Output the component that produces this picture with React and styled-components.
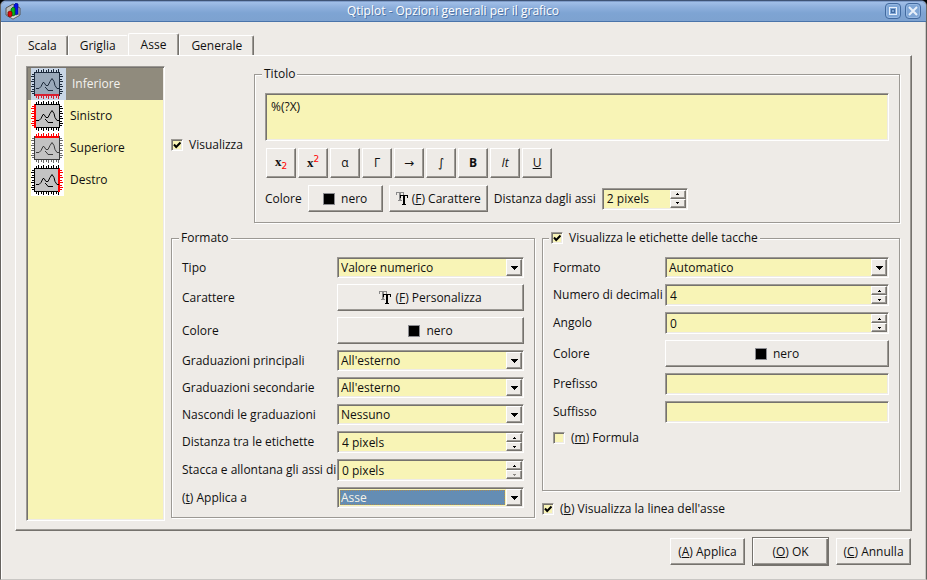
import React from "react";
import styled, { createGlobalStyle, css } from "styled-components";

const c = {
  face: "#eeebe7",
  field: "#f8f4b6",
  mid: "#9c9994",
  dark: "#75726d",
  light: "#ffffff",
  text: "#101010",
};

const sunken = css`
  border: 1px solid;
  border-color: ${c.mid} ${c.light} ${c.light} ${c.mid};
  box-shadow: inset 1px 1px 0 ${c.dark}, inset -1px -1px 0 ${c.face};
`;

const raised = css`
  border: 1px solid;
  border-color: ${c.light} ${c.dark} ${c.dark} ${c.light};
  box-shadow: inset -1px -1px 0 ${c.mid};
`;

const Global = createGlobalStyle`
  * { box-sizing: border-box; }
  body { margin: 0; background: #000; }
  body, button, input, select, textarea {
    font-family: "Open Sans", "Noto Sans", sans-serif;
    font-size: 12px;
    line-height: 16px;
    color: ${c.text};
  }
  button, input, select, textarea { margin: 0; border-radius: 0; outline: none; }
`;

const Window = styled.main`
  min-height: 100vh;
  display: flex;
  flex-direction: column;
  background: ${c.face};
  border: 1px solid #66635f;
  border-top-color: #3f5375;
  border-bottom-color: #c9c7c4;
  border-radius: 6px 6px 0 0;
  box-shadow: inset 1px 0 0 #fff, inset -1px 0 0 #c9c7c4;
`;

const TitleBar = styled.header`
  height: 21px;
  flex: none;
  display: grid;
  grid-template-columns: 28px 1fr 48px;
  align-items: center;
  padding: 0 5px 0 4px;
  background: linear-gradient(#a5c2ea, #8fb0dd 30%, #7ea4d3 60%, #7da2d0);
  border-bottom: 1px solid #4a74aa;
  border-radius: 5px 5px 0 0;
  box-shadow: inset 0 1px 0 #7f9cc9;
`;

const Caption = styled.h1`
  margin: 0;
  text-align: center;
  font-size: 12px;
  font-weight: 400;
  line-height: 16px;
  color: #fff;
  text-shadow: 1px 1px 0 #4f74a6;
`;

const TitleButtons = styled.div`
  display: flex;
  justify-content: flex-end;
  gap: 4px;
`;

const TitleButton = styled.button`
  width: 16px;
  height: 16px;
  padding: 0;
  border: 1px solid #426a9f;
  border-radius: 4px;
  background: #7fa6d6;
  box-shadow: inset 0 0 0 1px #96b8e2;
  svg { display: block; }
`;

const Content = styled.div`
  flex: 1;
  display: flex;
  flex-direction: column;
  padding: 11px 14px 13px;
`;

const Tabs = styled.nav`
  display: flex;
  align-items: flex-end;
  height: 22px;
  padding-left: 2px;
`;

const Tab = styled.button`
  height: ${(p) => (p.$on ? 23 : 20)}px;
  margin-bottom: ${(p) => (p.$on ? -1 : 0)}px;
  padding: ${(p) => (p.$on ? "0 12px 1px" : "0 11px")};
  background: ${c.face};
  border: solid;
  border-width: 1px 1px 0 1px;
  border-color: ${c.light} ${c.dark} ${c.light} ${c.light};
  border-radius: 2px 2px 0 0;
  box-shadow: inset -1px 0 0 ${c.mid};
  &:first-child { padding: 0 10px; }
  ${(p) => p.$flat && css`
    border-right-color: ${c.face};
    box-shadow: none;
  `}
`;

const Panel = styled.section`
  ${raised}
  flex: 1;
  display: grid;
  grid-template-columns: 139px minmax(0, 1fr);
  gap: 6px;
  padding: 10px 11px 9px 10px;
`;

const AxisList = styled.ul`
  ${sunken}
  list-style: none;
  margin: 0;
  padding: 1px;
  background: ${c.field};
`;

const AxisItem = styled.li`
  height: 32px;
  display: flex;
  align-items: center;
  padding-left: 3px;
  gap: 6px;
  ${(p) => p.$on && css`background: #908b7d; color: #f4f2ee;`}
`;

const AxisIconBox = styled.span`
  width: ${(p) => (p.$on ? 35 : 33)}px;
  height: 32px;
  display: flex;
  background: ${(p) => (p.$on ? "#c9d6e6" : "#fff")};
  svg { display: block; }
`;

const Settings = styled.div`
  display: flex;
  flex-direction: column;
  gap: 7px;
  padding-bottom: 3px;
`;

const TopArea = styled.div`
  display: grid;
  grid-template-columns: 77px minmax(0, 1fr);
  gap: 6px;
  align-items: center;
`;

const BottomArea = styled.div`
  flex: 1;
  display: grid;
  grid-template-columns: 364fr 358fr;
  gap: 7px;
`;

const RightColumn = styled.div`
  display: flex;
  flex-direction: column;
  gap: 10px;
  padding-bottom: 1px;
`;

const Group = styled.fieldset`
  min-width: 0;
  margin: 0;
  padding: ${(p) => p.$pad || "11px 10px 6px"};
  border: 1px solid ${c.mid};
  box-shadow: 1px 1px 0 ${c.light}, inset 1px 1px 0 ${c.light};
  ${(p) => p.$grow && css`flex: 1;`}
`;

const Legend = styled.legend`
  height: 16px;
  margin-left: ${(p) => p.$indent || -3}px;
  padding: 0 2px;
  background: ${c.face};
`;

const TitleText = styled.textarea`
  ${sunken}
  display: block;
  width: 100%;
  height: 48px;
  padding: 5px;
  resize: none;
  background: ${c.field};
`;

const ToolRow = styled.div`
  display: flex;
  gap: 2px;
  padding: 7px 1px;
`;

const Tool = styled.button`
  ${raised}
  width: 30px;
  height: 30px;
  padding: 0;
  background: ${c.face};
  font-weight: ${(p) => (p.$bold ? 700 : 400)};
  font-style: ${(p) => (p.$italic ? "italic" : "normal")};
  ${(p) => p.$symbol && css`font-family: "DejaVu Sans", sans-serif;`}
`;

const ScriptX = styled.b`
  font-family: "Liberation Serif", serif;
  font-size: 13px;
`;

const ScriptTwo = styled.span`
  font-family: "DejaVu Sans", sans-serif;
  font-size: 9px;
  line-height: 9px;
  color: #f00;
  vertical-align: ${(p) => (p.$up ? "super" : "sub")};
`;

const InlineRow = styled.div`
  display: flex;
  align-items: center;
  gap: 6px;
  white-space: nowrap;
`;

const Push = styled.button`
  ${raised}
  height: 27px;
  min-width: ${(p) => p.$min || 75}px;
  padding: 0 6px;
  display: inline-flex;
  align-items: center;
  justify-content: center;
  gap: ${(p) => p.$gap || 4}px;
  background: ${c.face};
  white-space: nowrap;
  ${(p) => p.$primary && css`
    height: 29px;
    border-color: ${c.dark};
    box-shadow: inset 1px 1px 0 ${c.light}, inset -1px -1px 0 ${c.dark}, inset -2px -2px 0 ${c.mid};
  `}
`;

const Swatch = styled.span`
  width: 12px;
  height: 12px;
  background: #000;
  border: 1px solid #8b8b90;
`;

const Form = styled.div`
  display: grid;
  grid-template-columns: ${(p) => p.$label}px minmax(0, 1fr);
  row-gap: 6px;
  align-items: center;
  white-space: nowrap;
`;

const Field = styled.div`
  ${sunken}
  display: grid;
  grid-template-columns: minmax(0, 1fr) 16px;
  width: ${(p) => (p.$w ? `${p.$w}px` : "auto")};
  height: ${(p) => p.$h || 22}px;
  padding: 1px;
  background: ${c.field};
`;

const Choice = styled.select`
  grid-area: 1 / 1 / 2 / 3;
  appearance: none;
  width: 100%;
  height: 17px;
  padding: 0 2px;
  border: 0;
  background: transparent;
  ${(p) => p.$focus && css`
    margin: 1px 0 0 1px;
    width: calc(100% - 18px);
    height: 15px;
    padding: 0 1px;
    line-height: 15px;
    background: #648db4;
    color: #f8f4e8;
    outline: 1px dotted #a58a5b;
    outline-offset: -1px;
  `}
`;

const DropMark = styled.span`
  ${raised}
  grid-area: 1 / 2;
  pointer-events: none;
  display: grid;
  place-items: center;
  background: ${c.face};
`;

const NumberText = styled.input`
  width: 100%;
  height: 18px;
  padding: 0 3px;
  border: 0;
  background: transparent;
`;

const Steps = styled.span`
  display: grid;
  grid-template-rows: 1fr 1fr;
`;

const Step = styled.button`
  ${raised}
  padding: 0;
  min-height: 0;
  display: grid;
  place-items: center;
  background: ${c.face};
  color: ${(p) => (p.$off ? "#8c8984" : "#000")};
`;

const PlainText = styled.input`
  ${sunken}
  width: 100%;
  height: 22px;
  padding: 0 3px;
  background: ${c.field};
`;

const CheckLabel = styled.label`
  display: inline-flex;
  align-items: center;
  gap: 6px;
  white-space: nowrap;
`;

const CheckInput = styled.input`
  ${sunken}
  appearance: none;
  flex: none;
  width: 12px;
  height: 12px;
  background: ${c.field};
  &:checked {
    background: ${c.field}
      url("data:image/svg+xml,%3Csvg xmlns='http://www.w3.org/2000/svg' viewBox='0 0 10 10'%3E%3Cpath d='M2 4.5 4.2 7 8.5 2.5' fill='none' stroke='%23000' stroke-width='2'/%3E%3C/svg%3E")
      center / 10px 10px no-repeat;
  }
`;

const WideCell = styled.div`
  grid-column: 1 / -1;
  padding-top: 1px;
`;

const Footer = styled.footer`
  display: flex;
  justify-content: flex-end;
  align-items: center;
  gap: 7px;
  padding: 6px 1px 0 0;
`;

function Check({ children, on }) {
  return (
    <CheckLabel>
      <CheckInput type="checkbox" defaultChecked={on} />
      <span>{children}</span>
    </CheckLabel>
  );
}

function Select({ id, value, focus }) {
  return (
    <Field $h={21}>
      <Choice id={id} $focus={focus} defaultValue={value}>
        <option>{value}</option>
      </Choice>
      <DropMark>
        <svg width="8" height="4" viewBox="0 0 8 4" shapeRendering="crispEdges">
          <path d="M0 0h8L4 4z" />
        </svg>
      </DropMark>
    </Field>
  );
}

function Spin({ id, value, width, atMin }) {
  return (
    <Field $w={width}>
      <NumberText id={id} defaultValue={value} />
      <Steps>
        <Step type="button" aria-label="+">
          <svg width="3" height="2" viewBox="0 0 3 2" shapeRendering="crispEdges">
            <path d="M1 0h1v1h1v1H0V1h1z" fill="currentColor" />
          </svg>
        </Step>
        <Step type="button" aria-label="-" $off={atMin}>
          <svg width="3" height="2" viewBox="0 0 3 2" shapeRendering="crispEdges">
            <path d="M0 0h3v1H2v1H1V1H0z" fill="currentColor" />
          </svg>
        </Step>
      </Steps>
    </Field>
  );
}

function ColorButton({ id }) {
  return (
    <Push type="button" id={id} $gap={6}>
      <Swatch />
      nero
    </Push>
  );
}

function FontIcon() {
  return (
    <svg width="12" height="13" viewBox="0 0 12 13" shapeRendering="crispEdges">
      <path d="M0 0h8v3H7V1H5v7h1v1H2V8h1V1H1v2H0z" fill="#8a8a8a" />
      <path d="M4 3h8v3h-1V4H9v8h1v1H6v-1h1V4H5v2H4z" fill="#000" />
    </svg>
  );
}

function AppIcon() {
  return (
    <svg width="17" height="17" viewBox="0 0 17 17">
      <path d="M1 5 8 1l7 4v7l-7 4-7-4z" fill="#b9bcbd" stroke="#555" />
      <path d="M1 12l7-3 7 3-7 4z" fill="#d8d8d8" stroke="#666" strokeWidth=".7" />
      <path d="M9 2l2-2 2 1v10l-2 1-2-1z" fill="#0711e8" stroke="#001080" strokeWidth=".7" />
      <path d="M6 6l2-2 2 1v7l-2 1-2-1z" fill="#0ab513" stroke="#064d08" strokeWidth=".7" />
      <path d="M3 9l2-1 2 1v4l-2 1-2-1z" fill="#e10b0b" stroke="#600" strokeWidth=".7" />
    </svg>
  );
}

function AxisIcon({ side, tone }) {
  const base = tone === "selected" ? "#1c2a3c" : tone === "soft" ? "#3c3c3c" : "#000";
  const tick = tone === "soft" ? "#6a6a6a" : base;
  const red = tone === "selected" ? "#d81f30" : "#f00";
  const fill = tone === "selected" ? "#9aa9ba" : "#c3c3c3";
  const line = (s) => (side === s ? red : base);
  const mark = (s) => (side === s ? red : tick);
  const w = (s) => (side === s ? 2 : 1);
  const horizontal = [5, 7, 10, 12, 15, 17, 20, 22, 25, 27];
  const vertical = [6, 8, 11, 13, 16, 18, 21, 23, 25];
  return (
    <svg width="32" height="32" viewBox="0 0 32 32" shapeRendering="crispEdges">
      <rect x="4" y="4" width="24" height="23" fill={fill} />
      <rect x="3" y={28 - w("bottom")} width="26" height={w("bottom")} fill={line("bottom")} />
      <rect x="3" y="4" width={w("left")} height="24" fill={line("left")} />
      <rect x={29 - w("right")} y="4" width={w("right")} height="24" fill={line("right")} />
      <rect x="4" y="4" width="24" height={w("top")} fill={line("top")} />
      {horizontal.map((x, i) => (
        <g key={x}>
          <rect x={x} y={i % 2 ? 1 : 2} width="1" height={i % 2 ? 3 : 2} fill={mark("top")} />
          <rect x={x} y="28" width="1" height={i % 2 ? 3 : 2} fill={mark("bottom")} />
        </g>
      ))}
      {vertical.map((y, i) => (
        <g key={y}>
          <rect x={i % 2 ? 0 : 1} y={y} width={i % 2 ? 3 : 2} height="1" fill={mark("left")} />
          <rect x="29" y={y} width={i % 2 ? 3 : 2} height="1" fill={mark("right")} />
        </g>
      ))}
      <path
        d="M5 20.5h3l2-2 2-4h1l2 3h2l2-4 2-3 2 3 1 4 2 3h2M14 19l2 2 1 1.5h5"
        fill="none"
        stroke={base}
        shapeRendering="auto"
      />
    </svg>
  );
}

const axes = [
  { name: "Inferiore", side: "bottom", tone: "selected" },
  { name: "Sinistro", side: "left" },
  { name: "Superiore", side: "top", tone: "soft" },
  { name: "Destro", side: "right" },
];

export default function App() {
  return (
    <>
      <Global />
      <Window>
        <TitleBar>
          <AppIcon />
          <Caption>Qtiplot - Opzioni generali per il grafico</Caption>
          <TitleButtons>
            <TitleButton type="button" aria-label="Ingrandisci">
              <svg width="14" height="14" viewBox="0 0 14 14" shapeRendering="crispEdges">
                <rect x="3.5" y="3.5" width="7" height="7" fill="none" stroke="#e8f0fa" />
                <rect x="5.5" y="5.5" width="3" height="3" fill="none" stroke="#426a9f" />
              </svg>
            </TitleButton>
            <TitleButton type="button" aria-label="Chiudi">
              <svg width="14" height="14" viewBox="0 0 14 14">
                <path d="M3 3l8 8m0-8l-8 8" stroke="#e8f0fa" strokeWidth="2" />
              </svg>
            </TitleButton>
          </TitleButtons>
        </TitleBar>
        <Content>
          <Tabs>
            <Tab type="button">Scala</Tab>
            <Tab type="button" $flat>Griglia</Tab>
            <Tab type="button" $on>Asse</Tab>
            <Tab type="button">Generale</Tab>
          </Tabs>
          <Panel>
            <AxisList>
              {axes.map((a, i) => (
                <AxisItem key={a.name} $on={i === 0}>
                  <AxisIconBox $on={i === 0}>
                    <AxisIcon side={a.side} tone={a.tone} />
                  </AxisIconBox>
                  {a.name}
                </AxisItem>
              ))}
            </AxisList>
            <Settings>
              <TopArea>
                <Check on>Visualizza</Check>
                <Group $pad="11px 10px 10px">
                  <Legend>Titolo</Legend>
                  <TitleText aria-label="Titolo" defaultValue="%(?X)" />
                  <ToolRow>
                    <Tool type="button"><ScriptX>x</ScriptX><ScriptTwo>2</ScriptTwo></Tool>
                    <Tool type="button"><ScriptX>x</ScriptX><ScriptTwo $up>2</ScriptTwo></Tool>
                    <Tool type="button">α</Tool>
                    <Tool type="button">Γ</Tool>
                    <Tool type="button" $symbol>→</Tool>
                    <Tool type="button" $symbol>∫</Tool>
                    <Tool type="button" $bold>B</Tool>
                    <Tool type="button" $italic>It</Tool>
                    <Tool type="button"><u>U</u></Tool>
                  </ToolRow>
                  <InlineRow>
                    <label htmlFor="title-color">Colore</label>
                    <ColorButton id="title-color" />
                    <Push type="button"><FontIcon /><span>(<u>F</u>) Carattere</span></Push>
                    <label htmlFor="axis-gap">Distanza dagli assi</label>
                    <Spin id="axis-gap" value="2 pixels" width={86} />
                  </InlineRow>
                </Group>
              </TopArea>
              <BottomArea>
                <Group>
                  <Legend>Formato</Legend>
                  <Form $label={155}>
                    <label htmlFor="kind">Tipo</label>
                    <Select id="kind" value="Valore numerico" />
                    <label htmlFor="font">Carattere</label>
                    <Push type="button" id="font"><FontIcon /><span>(<u>F</u>) Personalizza</span></Push>
                    <label htmlFor="axis-color">Colore</label>
                    <ColorButton id="axis-color" />
                    <label htmlFor="major">Graduazioni principali</label>
                    <Select id="major" value="All'esterno" />
                    <label htmlFor="minor">Graduazioni secondarie</label>
                    <Select id="minor" value="All'esterno" />
                    <label htmlFor="hide">Nascondi le graduazioni</label>
                    <Select id="hide" value="Nessuno" />
                    <label htmlFor="label-gap">Distanza tra le etichette</label>
                    <Spin id="label-gap" value="4 pixels" />
                    <label htmlFor="detach">Stacca e allontana gli assi di</label>
                    <Spin id="detach" value="0 pixels" atMin />
                    <label htmlFor="apply-to">(<u>t</u>) Applica a</label>
                    <Select id="apply-to" value="Asse" focus />
                  </Form>
                </Group>
                <RightColumn>
                  <Group $grow>
                    <Legend $indent={-4}><Check on>Visualizza le etichette delle tacche</Check></Legend>
                    <Form $label={112}>
                      <label htmlFor="format">Formato</label>
                      <Select id="format" value="Automatico" />
                      <label htmlFor="decimals">Numero di decimali</label>
                      <Spin id="decimals" value="4" />
                      <label htmlFor="angle">Angolo</label>
                      <Spin id="angle" value="0" />
                      <label htmlFor="label-color">Colore</label>
                      <ColorButton id="label-color" />
                      <label htmlFor="prefix">Prefisso</label>
                      <PlainText id="prefix" />
                      <label htmlFor="suffix">Suffisso</label>
                      <PlainText id="suffix" />
                      <WideCell><Check>(<u>m</u>) Formula</Check></WideCell>
                    </Form>
                  </Group>
                  <Check on>(<u>b</u>) Visualizza la linea dell'asse</Check>
                </RightColumn>
              </BottomArea>
            </Settings>
          </Panel>
          <Footer>
            <Push type="button"><span>(<u>A</u>) Applica</span></Push>
            <Push type="button" $primary $min={77}><span>(<u>O</u>) OK</span></Push>
            <Push type="button"><span>(<u>C</u>) Annulla</span></Push>
          </Footer>
        </Content>
      </Window>
    </>
  );
}
